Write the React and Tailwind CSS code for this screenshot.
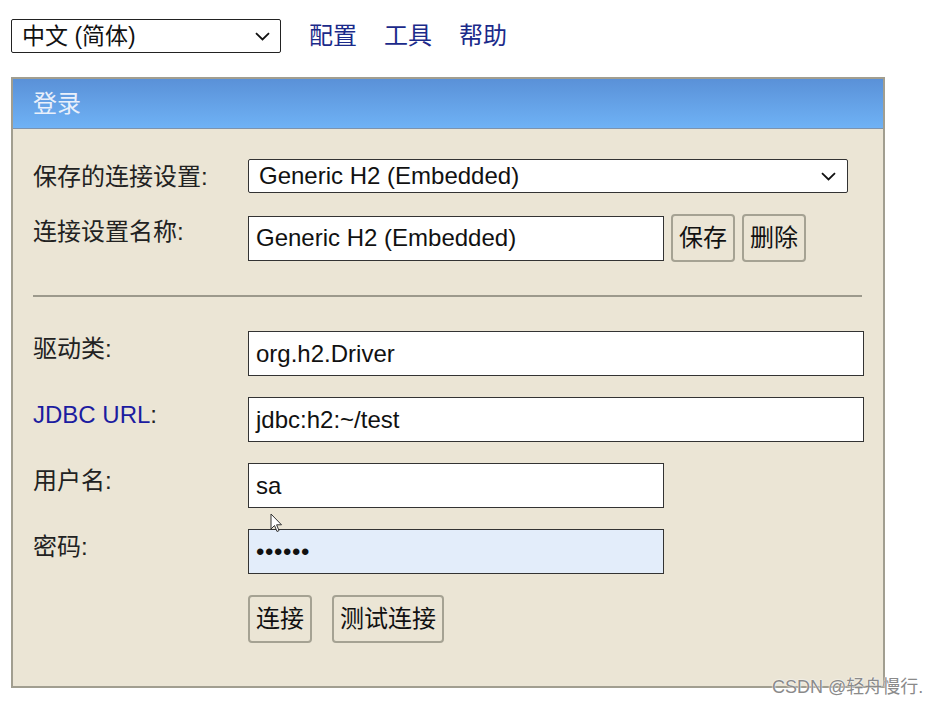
import React from "react";

const FONT = { fontFamily: '"Liberation Sans", "Noto Sans CJK SC", sans-serif' };

function Chevron() {
  return (
    <svg width="15" height="9" viewBox="0 0 15 9" fill="none">
      <path d="M1 1.2 L7.5 7.5 L14 1.2" stroke="#111" strokeWidth="1.8" />
    </svg>
  );
}

function Label({ children }) {
  return <div className="w-[215px] shrink-0 pt-[4px] text-[24px] leading-[28px] text-[#222]">{children}</div>;
}

function Field({ w, value, bg = "bg-white", extra = "" }) {
  return (
    <div
      className={`h-[45px] border border-[#333] ${bg} flex items-center pl-[7px] text-[24px] text-[#111] ${extra}`}
      style={{ width: w }}
    >
      {value}
    </div>
  );
}

function Btn({ children }) {
  return (
    <div className="h-[48px] px-[6px] flex items-center rounded-[4px] border-2 border-[#a5a293] bg-[#ebe5d5] text-[24px] leading-[28px] text-[#111]">
      {children}
    </div>
  );
}

export default function App() {
  return (
    <div className="relative w-[937px] h-[705px] bg-white overflow-hidden" style={FONT}>
      {/* top bar */}
      <div className="flex items-center h-[53px] pt-[19px] pl-[11px]">
        <div className="w-[270px] h-[34px] border border-[#222] rounded-[2px] bg-white flex items-center justify-between pl-[10px] pr-[10px] text-[23px] text-[#111]">
          <span>中文 (简体)</span>
          <Chevron />
        </div>
        <div className="flex items-center gap-[27px] ml-[28px] text-[24px] leading-[28px] text-[#1b2a8a]">
          <span>配置</span>
          <span>工具</span>
          <span>帮助</span>
        </div>
      </div>

      {/* panel */}
      <div className="mt-[24px] ml-[11px] w-[874px] h-[611px] border-2 border-[#a19e90] bg-[#ebe5d5]">
        <div className="h-[50px] flex items-center pl-[20px] text-[24px] text-[#e9f0fb] bg-gradient-to-b from-[#5a91d8] to-[#6fb2f5] border-b border-[#7d93ad]">
          登录
        </div>

        <div className="pl-[20px] pt-[30px]">
          {/* row1 */}
          <div className="flex items-start">
            <Label>保存的连接设置:</Label>
            <div className="w-[600px] h-[34px] border border-[#333] rounded-[2px] bg-white flex items-center justify-between pl-[10px] pr-[11px] text-[24px] text-[#111]">
              <span>Generic H2 (Embedded)</span>
              <Chevron />
            </div>
          </div>

          {/* row2 */}
          <div className="flex items-start mt-[21px]">
            <Label>连接设置名称:</Label>
            <div className="flex items-center gap-[7px]">
              <Field w="416px" value="Generic H2 (Embedded)" />
              <Btn>保存</Btn>
              <Btn>删除</Btn>
            </div>
          </div>

          <div className="mt-[33px] w-[829px] h-[2px] bg-[#9c998c]" />

          <div className="flex flex-col gap-[21px] mt-[34px]">
            <div className="flex items-start">
              <Label>驱动类:</Label>
              <Field w="616px" value="org.h2.Driver" />
            </div>
            <div className="flex items-start">
              <Label>
                <span className="text-[#1c1ca0]">JDBC URL</span>:
              </Label>
              <Field w="616px" value="jdbc:h2:~/test" />
            </div>
            <div className="flex items-start">
              <Label>用户名:</Label>
              <Field w="416px" value="sa" />
            </div>
            <div className="flex items-start">
              <Label>密码:</Label>
              <Field w="416px" value="••••••" bg="bg-[#e3edfa]" extra="tracking-[0.6px]" />
            </div>
            <div className="flex items-start">
              <div className="w-[215px] shrink-0" />
              <div className="flex gap-[20px]">
                <Btn>连接</Btn>
                <Btn>测试连接</Btn>
              </div>
            </div>
          </div>
        </div>
      </div>

      {/* mouse cursor */}
      <svg className="absolute left-[270px] top-[513px]" width="14" height="21" viewBox="0 0 14 21">
        <path d="M1 1 L1 16 L4.5 12.5 L7 18.5 L9 17.6 L6.6 11.8 L11.5 11.8 Z" fill="#fff" stroke="#333" strokeWidth="1" />
      </svg>

      {/* watermark */}
      <div
        className="absolute left-[772px] top-[675px] text-[18px] leading-[24px] text-[#8a8a8a]"
        style={{ textShadow: "0 0 2px #fff, 0 0 1px #fff" }}
      >
        CSDN @轻舟慢行.
      </div>
    </div>
  );
}
